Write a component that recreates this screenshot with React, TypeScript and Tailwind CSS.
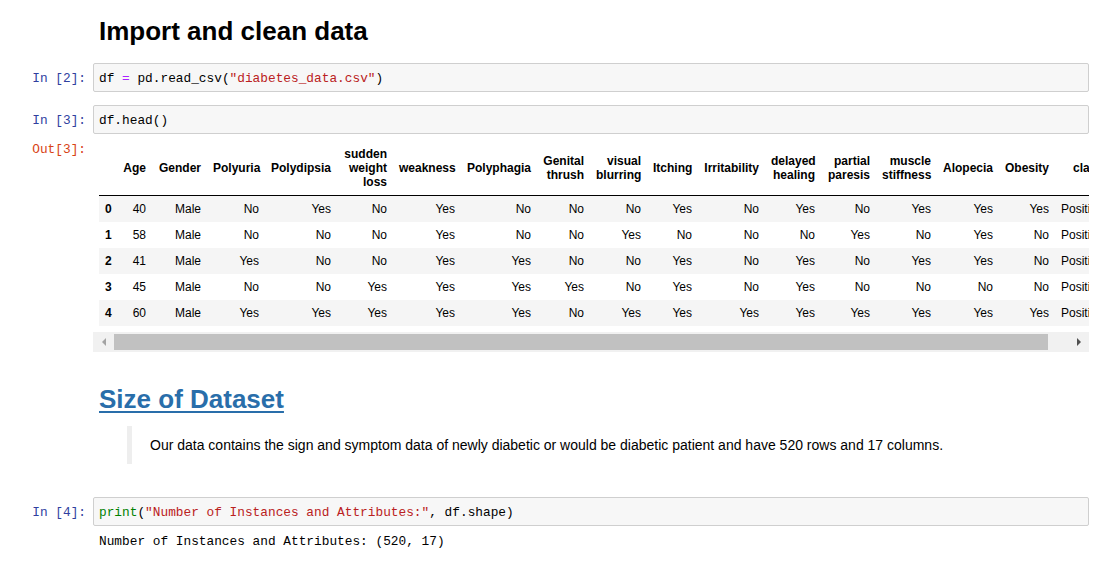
const mono = "font-['Liberation_Mono','DejaVu_Sans_Mono',monospace] text-[12.8px] leading-[17px]";

const columns = [
  { label: "", w: "w-[18px]" },
  { label: "Age", w: "w-[35px]" },
  { label: "Gender", w: "w-[55px]" },
  { label: "Polyuria", w: "w-[58px]" },
  { label: "Polydipsia", w: "w-[72px]" },
  { label: "sudden weight loss", w: "w-[56px]" },
  { label: "weakness", w: "w-[68px]" },
  { label: "Polyphagia", w: "w-[76px]" },
  { label: "Genital thrush", w: "w-[53px]" },
  { label: "visual blurring", w: "w-[57px]" },
  { label: "Itching", w: "w-[51px]" },
  { label: "Irritability", w: "w-[67px]" },
  { label: "delayed healing", w: "w-[56px]" },
  { label: "partial paresis", w: "w-[55px]" },
  { label: "muscle stiffness", w: "w-[61px]" },
  { label: "Alopecia", w: "w-[62px]" },
  { label: "Obesity", w: "w-[56px]" },
  { label: "class", w: "w-[54px]" },
];

const rows = [
  ["40", "Male", "No", "Yes", "No", "Yes", "No", "No", "No", "Yes", "No", "Yes", "No", "Yes", "Yes", "Yes", "Positive"],
  ["58", "Male", "No", "No", "No", "Yes", "No", "No", "Yes", "No", "No", "No", "Yes", "No", "Yes", "No", "Positive"],
  ["41", "Male", "Yes", "No", "No", "Yes", "Yes", "No", "No", "Yes", "No", "Yes", "No", "Yes", "Yes", "No", "Positive"],
  ["45", "Male", "No", "No", "Yes", "Yes", "Yes", "Yes", "No", "Yes", "No", "Yes", "No", "No", "No", "No", "Positive"],
  ["60", "Male", "Yes", "Yes", "Yes", "Yes", "Yes", "No", "Yes", "Yes", "Yes", "Yes", "Yes", "Yes", "Yes", "Yes", "Positive"],
];

function Prompt({ kind, n, className = "" }: { kind: "In" | "Out"; n: number; className?: string }) {
  return (
    <div className={`w-[93px] shrink-0 flex justify-end pr-[7px] whitespace-pre ${mono} ${kind === "In" ? "text-[#303F9F]" : "text-[#D84315]"} ${className}`}>
      {kind === "In" ? `In [${n}]:` : `Out[${n}]:`}
    </div>
  );
}

function CodeCell({ n, children, className = "" }: { n: number; children: React.ReactNode; className?: string }) {
  return (
    <div className={`flex ${className}`}>
      <Prompt kind="In" n={n} className="h-[29px] items-center pt-[2px]" />
      <div className={`w-[996px] h-[29px] flex items-center pt-[2px] pl-[5px] bg-[#f7f7f7] border border-[#cfcfcf] rounded-[2px] text-black whitespace-pre ${mono}`}>
        {children}
      </div>
    </div>
  );
}

function DataFrame() {
  return (
    <table className="table-fixed border-collapse w-[1010px] text-[12px] leading-[14px] text-black">
      <colgroup>
        {columns.map((c, i) => (
          <col key={i} className={c.w} />
        ))}
      </colgroup>
      <thead className="border-b border-black">
        <tr>
          {columns.map((c, i) => (
            <th key={i} className="px-[6px] py-[6px] text-right align-middle font-bold">
              {c.label}
            </th>
          ))}
        </tr>
      </thead>
      <tbody>
        {rows.map((r, i) => (
          <tr key={i} className={i % 2 === 0 ? "bg-[#f5f5f5]" : "bg-white"}>
            <th className="px-[6px] py-[6px] text-right font-bold">{i}</th>
            {r.map((v, j) => (
              <td key={j} className="px-[6px] py-[6px] text-right whitespace-nowrap">
                {v}
              </td>
            ))}
          </tr>
        ))}
      </tbody>
    </table>
  );
}

function ScrollBar() {
  return (
    <div className="flex h-[20px] bg-[#f1f1f1]">
      <div className="w-[21px] flex items-center justify-center">
        <div className="w-0 h-0 border-y-[4px] border-y-transparent border-r-[4px] border-r-[#a3a3a3]" />
      </div>
      <div className="w-[934px] py-[2px]">
        <div className="h-full bg-[#c1c1c1]" />
      </div>
      <div className="w-[20px]" />
      <div className="w-[21px] flex items-center justify-center">
        <div className="w-0 h-0 border-y-[4px] border-y-transparent border-l-[4px] border-l-[#505050]" />
      </div>
    </div>
  );
}

export default function App() {
  return (
    <div className="w-[1108px] h-[570px] overflow-hidden bg-white text-black font-['Liberation_Sans',Arial,sans-serif]">
      <div className="flex pt-[16px]">
        <div className="w-[93px] shrink-0" />
        <h1 className="pl-[6px] text-[26px] leading-[30px] font-bold">Import and clean data</h1>
      </div>

      <CodeCell n={2} className="mt-[17px]">
        df <span className="text-[#AA22FF]">=</span> pd.read_csv(<span className="text-[#BA2121]">"diabetes_data.csv"</span>)
      </CodeCell>

      <CodeCell n={3} className="mt-[13px]">
        df.head()
      </CodeCell>

      <div className="flex">
        <Prompt kind="Out" n={3} className="pt-[7px]" />
        <div className="w-[996px]">
          <div className="overflow-hidden pl-[6px] pt-[7px] pb-[6px]">
            <DataFrame />
          </div>
          <ScrollBar />
        </div>
      </div>

      <div className="flex mt-[32px]">
        <div className="w-[93px] shrink-0" />
        <div className="w-[996px] pl-[6px]">
          <h2 className="text-[26px] leading-[30px] font-bold text-[#296eaa] underline decoration-2 underline-offset-[3px]">
            Size of Dataset
          </h2>
          <blockquote className="mt-[12px] ml-[28px] border-l-[5px] border-[#eeeeee] pl-[18px] py-[9px] text-[14px] leading-[20px]">
            Our data contains the sign and symptom data of newly diabetic or would be diabetic patient and have 520 rows and 17 columns.
          </blockquote>
        </div>
      </div>

      <CodeCell n={4} className="mt-[33px]">
        <span className="text-[#008000]">print</span>(<span className="text-[#BA2121]">"Number of Instances and Attributes:"</span>, df.shape)
      </CodeCell>

      <div className="flex">
        <div className="w-[93px] shrink-0" />
        <div className={`pl-[6px] pt-[7px] whitespace-pre ${mono}`}>Number of Instances and Attributes: (520, 17)</div>
      </div>
    </div>
  );
}
